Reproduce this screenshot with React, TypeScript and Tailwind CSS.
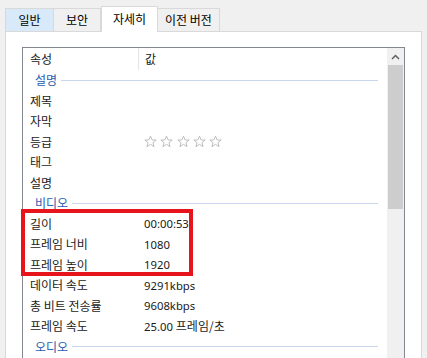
import React from "react";

const FONT = { fontFamily: '"Noto Sans CJK KR", "Noto Sans", sans-serif' };
const LATIN = { fontFamily: '"Noto Sans", "Noto Sans CJK KR", sans-serif' };

function Group({ label }: { label: string }) {
  return (
    <div className="flex h-[20.5px] items-center pl-[12px] pr-[9px]">
      <span className="text-[12px] leading-none text-[#2a5db0]">{label}</span>
      <div className="ml-[4px] h-px flex-1 bg-[#c9d6ee]" />
    </div>
  );
}

function Row({ name, value }: { name: string; value?: React.ReactNode }) {
  return (
    <div className="flex h-[20.5px] items-center text-[12px] leading-none text-[#1a1a1a]">
      <div className="w-[121px] pl-[7px] whitespace-nowrap">{name}</div>
      <div className="flex items-center whitespace-nowrap">{value}</div>
    </div>
  );
}

function L({ children }: { children: React.ReactNode }) {
  return (
    <span className="text-[11.3px]" style={LATIN}>
      {children}
    </span>
  );
}

function Stars() {
  return (
    <div className="flex gap-[3.3px] text-[#b8b8b8]">
      {[0, 1, 2, 3, 4].map((i) => (
        <svg key={i} width="13" height="13" viewBox="0 0 24 24">
          <polygon
            points="12,2 14.9,9 22.5,9.3 16.6,14.1 18.6,21.5 12,17.3 5.4,21.5 7.4,14.1 1.5,9.3 9.1,9"
            fill="none"
            stroke="currentColor"
            strokeWidth="1.7"
            strokeLinejoin="round"
          />
        </svg>
      ))}
    </div>
  );
}

export default function App() {
  return (
    <div
      className="relative flex h-[358px] w-[427px] flex-col overflow-hidden bg-[#f0f0f0]"
      style={FONT}
    >
      {/* Tabs */}
      <div className="flex h-[31px] items-end pl-[5px] pt-[6px] text-[12px] leading-none text-black">
        <div className="flex h-[23px] w-[49px] items-center justify-center border border-b-0 border-[#d9d9d9] bg-[#d8eaf9]">
          일반
        </div>
        <div className="flex h-[23px] w-[47px] items-center justify-center border border-b-0 border-l-0 border-[#d9d9d9] bg-[#f0f0f0]">
          보안
        </div>
        <div className="relative z-10 -mb-px flex h-[26px] w-[57px] items-center justify-center border border-b-0 border-[#d9d9d9] bg-white pb-[2px]">
          자세히
        </div>
        <div className="flex h-[23px] w-[62px] items-center justify-center border border-b-0 border-l-0 border-[#d9d9d9] bg-[#f0f0f0]">
          이전 버전
        </div>
      </div>

      {/* Panel */}
      <div className="ml-[5px] flex w-[417px] flex-1 flex-col border-l border-r border-t border-[#d9d9d9] bg-white pl-[16px] pt-[15px]">
        <div className="flex h-[330px] w-[383px] border border-[#828790] bg-white">
          <div className="flex flex-1 flex-col">
            {/* header */}
            <div className="flex h-[22px] items-center text-[12px] leading-none text-[#1a1a1a]">
              <div className="flex h-full w-[116px] items-center border-r border-[#e5e5e5] pl-[7px]">
                속성
              </div>
              <div className="pl-[6px]">값</div>
            </div>
            <Group label="설명" />
            <Row name="제목" />
            <Row name="자막" />
            <Row name="등급" value={<Stars />} />
            <Row name="태그" />
            <Row name="설명" />
            <Group label="비디오" />
            <Row name="길이" value={<L>00:00:53</L>} />
            <Row name="프레임 너비" value={<L>1080</L>} />
            <Row name="프레임 높이" value={<L>1920</L>} />
            <Row name="데이터 속도" value={<L>9291kbps</L>} />
            <Row name="총 비트 전송률" value={<L>9608kbps</L>} />
            <Row
              name="프레임 속도"
              value={
                <>
                  <L>25.00&nbsp;</L>
                  <span>프레임/초</span>
                </>
              }
            />
            <Group label="오디오" />
          </div>
          {/* Scrollbar */}
          <div className="flex w-[17px] flex-col bg-[#f0f0f0]">
            <div className="flex h-[17px] items-center justify-center">
              <svg width="9" height="6" viewBox="0 0 9 6">
                <path d="M1 5 L4.5 1.5 L8 5" fill="none" stroke="#606060" strokeWidth="1.5" />
              </svg>
            </div>
            <div className="mx-px h-[144px] bg-[#cdcdcd]" />
          </div>
        </div>
      </div>

      {/* Red highlight box */}
      <div className="absolute left-[21px] top-[209px] h-[67px] w-[172px] border-4 border-[#e8141c]" />
    </div>
  );
}
